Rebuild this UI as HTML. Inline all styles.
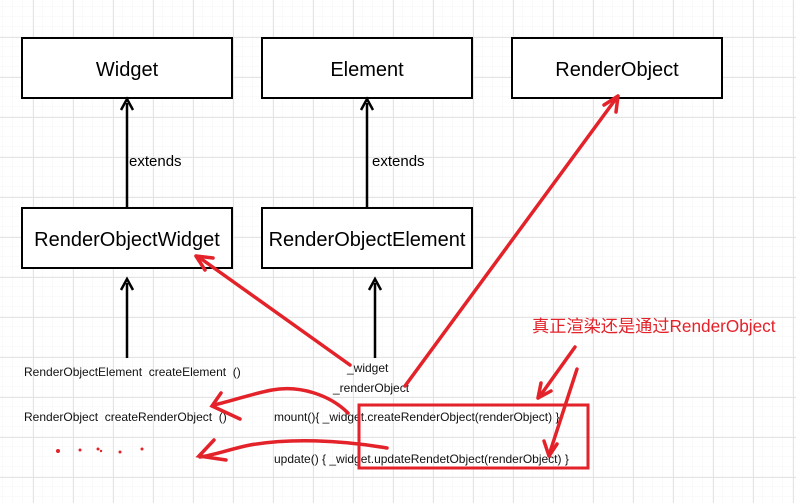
<!DOCTYPE html>
<html><head><meta charset="utf-8"><style>
html,body{margin:0;padding:0;background:#fff;}
svg{display:block;}
text{font-family:"Liberation Sans","Noto Sans CJK SC",sans-serif;white-space:pre;}
</style></head><body>
<svg width="796" height="503" viewBox="0 0 796 503" xmlns="http://www.w3.org/2000/svg" xml:space="preserve">
<defs>
<pattern id="minor" x="3" y="7" width="10" height="10" patternUnits="userSpaceOnUse">
<path d="M10 0V10M0 10H10" stroke="#f5f5f5" stroke-width="1" fill="none"/>
</pattern>
<pattern id="major" x="33" y="37" width="40" height="40" patternUnits="userSpaceOnUse">
<path d="M0.5 0V40M0 0.5H40" stroke="#e4e4e4" stroke-width="1" fill="none"/>
</pattern>
</defs>
<rect width="796" height="503" fill="#fff"/>
<rect width="796" height="503" fill="url(#minor)"/>
<rect width="796" height="503" fill="url(#major)"/>

<g fill="#fff" stroke="#000" stroke-width="2">
<rect x="22" y="38" width="210" height="60"/>
<rect x="262" y="38" width="210" height="60"/>
<rect x="512" y="38" width="210" height="60"/>
<rect x="22" y="208" width="210" height="60"/>
<rect x="262" y="208" width="210" height="60"/>
</g>
<g font-size="20" text-anchor="middle" fill="#000">
<text x="127" y="76">Widget</text>
<text x="367" y="76">Element</text>
<text x="617" y="76">RenderObject</text>
<text x="127" y="246">RenderObjectWidget</text>
<text x="367" y="246">RenderObjectElement</text>
</g>

<g stroke="#000" stroke-width="2.5" fill="none">
<path d="M127 207V103"/><path d="M121 110L127 99L133 110"/>
<path d="M367 207V103"/><path d="M361 110L367 99L373 110"/>
<path d="M127 358V283"/><path d="M121 290L127 279L133 290"/>
<path d="M375 358V283"/><path d="M369 290L375 279L381 290"/>
</g>
<g font-size="15" fill="#000">
<text x="129" y="166">extends</text>
<text x="372" y="166">extends</text>
</g>

<g font-size="12" fill="#111">
<text x="24" y="376">RenderObjectElement  createElement  ()</text>
<text x="24" y="421">RenderObject  createRenderObject  ()</text>
<text x="347" y="372">_widget</text>
<text x="333" y="392">_renderObject</text>
<text x="274" y="421">mount(){ _widget.createRenderObject(renderObject) }</text>
<text x="274" y="463">update() { _widget.updateRendetObject(renderObject) }</text>
</g>

<g stroke="#e3222a" stroke-width="3.5" fill="none" stroke-linecap="round">
<path d="M350 365L200 258"/><path d="M196 256L213 258M196 256L205 270"/>
<path d="M405 386L615 100"/><path d="M618 96L604 105M618 96L616 112"/>
<rect x="359" y="405" width="229" height="63" stroke-width="3"/>
<path d="M575 347L540 396"/><path d="M538 398L541 383M538 398L551 391"/>
<path d="M577 369L550 452"/><path d="M549 456L544 441M549 456L557 444"/>
<path d="M348 413C330 395 300 385 272 390C255 393 235 400 214 405"/>
<path d="M221 393L212 406L240 419"/>
<path d="M387 448C340 440 290 438 250 445C230 449 215 455 200 457"/>
<path d="M214 440L199 456L226 460"/>
</g>
<g fill="#e3222a">
<circle cx="58" cy="451" r="2"/><circle cx="80" cy="450" r="1.5"/><circle cx="98" cy="449" r="1.5"/><circle cx="101" cy="451" r="1.2"/><circle cx="120" cy="452" r="1.5"/><circle cx="142" cy="449" r="1.5"/>
</g>
<text x="532" y="332" font-size="17.2" fill="#e3222a">真正渲染还是通过RenderObject</text>
</svg>
</body></html>
